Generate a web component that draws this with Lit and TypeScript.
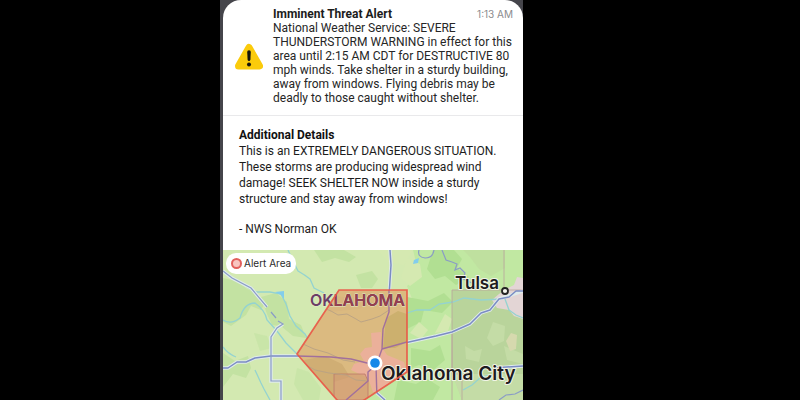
import { LitElement, html, css } from 'lit';
import { customElement, property } from 'lit/decorators.js';

@customElement('warning-icon')
export class WarningIcon extends LitElement {
  static styles = css`
    :host {
      display: block;
    }
    .icon {
      display: block;
      width: 28px;
      height: 28px;
    }
  `;

  render() {
    return html`
      <svg class="icon" viewBox="0 0 28 28" role="img" aria-label="Warning">
        <path
          d="M14 5.500L24.500 24H3.500Z"
          fill="#fbcb0b"
          stroke="#fbcb0b"
          stroke-width="7"
          stroke-linejoin="round"
        />
        <path d="M12.200 10Q12.200 8.300 14 8.300T15.800 10L15.400 17.500Q15.200 19 14 19T12.600 17.500Z" fill="#15130c" />
        <circle cx="14" cy="22.500" r="2" fill="#15130c" />
      </svg>
    `;
  }
}

@customElement('alert-summary')
export class AlertSummary extends LitElement {
  @property() heading = '';
  @property() time = '';
  @property() message = '';

  static styles = css`
    :host {
      display: block;
    }
    .summary {
      display: grid;
      grid-template-columns: 28px 1fr;
      column-gap: 10px;
      align-items: center;
      padding: 7px 8px 10px 12px;
      border-bottom: 1px solid #e9e9eb;
    }
    .top {
      display: flex;
      justify-content: space-between;
      align-items: baseline;
      padding-right: 2px;
    }
    .heading {
      margin: 0;
      font-size: 12px;
      line-height: 14px;
      font-weight: 700;
    }
    .time {
      font-family: Inter, sans-serif;
      font-size: 10px;
      color: #8b8b8e;
    }
    .message {
      margin: 0;
      font-size: 12px;
      line-height: 14px;
      color: #262626;
    }
  `;

  render() {
    return html`
      <section class="summary">
        <warning-icon></warning-icon>
        <div>
          <div class="top">
            <h1 class="heading">${this.heading}</h1>
            <time class="time">${this.time}</time>
          </div>
          <p class="message">${this.message}</p>
        </div>
      </section>
    `;
  }
}

@customElement('alert-details')
export class AlertDetails extends LitElement {
  static styles = css`
    :host {
      display: block;
    }
    .details {
      padding: 11px 16px 13px;
      font-size: 12px;
      line-height: 16px;
      color: #1c1c1c;
    }
    .heading {
      margin: 0;
      font-size: 12px;
      line-height: 16px;
      font-weight: 700;
      color: #111;
    }
    .text {
      margin: 0 0 14px;
    }
    .sender {
      margin: 0;
    }
  `;

  render() {
    return html`
      <section class="details">
        <h2 class="heading">Additional Details</h2>
        <p class="text">
          This is an EXTREMELY DANGEROUS SITUATION. These storms are producing widespread wind
          damage! SEEK SHELTER NOW inside a sturdy structure and stay away from windows!
        </p>
        <p class="sender">- NWS Norman OK</p>
      </section>
    `;
  }
}

@customElement('alert-map')
export class AlertMap extends LitElement {
  static styles = css`
    :host {
      display: block;
      position: relative;
      min-height: 150px;
      overflow: hidden;
      background: #d0e8ad;
      font-family: Inter, 'Liberation Sans', sans-serif;
    }
    .map {
      position: absolute;
      inset: 0;
      width: 100%;
      height: 100%;
    }
    .legend {
      position: absolute;
      top: 3px;
      left: 3px;
      display: flex;
      align-items: center;
      gap: 2px;
      padding: 0 5px;
      border-radius: 10px;
      background: #fff;
      font-size: 10px;
      line-height: 21px;
      color: #2b2b2b;
    }
    .swatch {
      width: 7px;
      height: 7px;
      border: 2px solid #e2605c;
      border-radius: 50%;
      background: #f8c5c0;
    }
    .water {
      fill: none;
      stroke: #94d3d0;
      stroke-width: 1.3;
    }
    .casing {
      fill: none;
      stroke: #dfebea;
      stroke-width: 3.4;
    }
    .road {
      fill: none;
      stroke: #7b8cc4;
      stroke-width: 1.5;
      stroke-linejoin: round;
    }
    .minor {
      fill: none;
      stroke: #8a9cc6;
      stroke-width: 1.2;
    }
    .boundary {
      fill: none;
      stroke: #b9a39c;
      stroke-width: 0.8;
    }
    .label {
      font-weight: 600;
      fill: #1e1b20;
      stroke: #f1f4e6;
      stroke-width: 2px;
      stroke-linejoin: round;
      paint-order: stroke;
    }
    .city {
      font-size: 19px;
    }
    .town {
      font-size: 17px;
    }
    .state {
      font-size: 16px;
      font-weight: 600;
      fill: #6a3d66;
      stroke: #e3ecc9;
      stroke-width: 1px;
      paint-order: stroke;
    }
    .state-inside {
      fill: #94404f;
      stroke: none;
    }
  `;

  render() {
    return html`
      <svg class="map" viewBox="0 0 300 150" preserveAspectRatio="xMidYMin slice" role="img" aria-label="Map of the alert area">
        <defs>
          <clipPath id="alert-clip">
            <path d="M116 40H184V122L129 158H121L74 104Z" />
          </clipPath>
        </defs>
        <rect width="300" height="150" fill="#d3e9b1" />

        <!-- woodland and fields -->
        <g fill="#c3e2a2">
          <path d="M0 28L14 31 24 39 34 43 42 53 38 60 28 56 23 65 8 76 0 72Z" />
          <path d="M38 47L53 43 64 52 66 69 78 75 83 88 70 86 58 76 49 75 44 64Z" />
          <path d="M0 103L12 111 25 106 28 118 23 128 10 124 0 137Z" />
          <path d="M91 0H121L133 7 126 12 112 8 99 12Z" />
          <path d="M133 25L149 21 155 29 149 38H138Z" />
          <path d="M31 83L44 86 49 98 37 101Z" opacity=".6" />
          <path d="M74 118L86 122 98 138 96 150H80L71 134Z" opacity=".6" />
        </g>
        <path d="M190 0H300V150H140L166 132 184 122V90L180 67 190 51 184 36 196 24Z" fill="#c1e8a2" />
        <g fill="#b1df92">
          <path d="M184 47L205 51 221 43 230 52 219 63 201 60 198 72 184 79Z" />
          <path d="M188 98L207 101 217 95 222 110 209 121 196 115 188 118Z" />
          <path d="M210 0H231L239 9 234 18 246 27 233 35 222 26 212 29 204 19Z" />
          <path d="M175 130L193 134 203 128 217 137 210 150H171Z" />
        </g>
        <g fill="#d5e9b1">
          <path d="M184 8L197 14 199 27 187 36 178 28Z" />
          <path d="M196 72L205 80 198 89 187 83Z" />
          <path d="M222 64L229 69 225 81 212 83Z" />
          <path d="M155 0H190L181 15 165 12Z" />
        </g>
        <path d="M229 40H300V150H239L229 122Z" fill="#b9d49b" />
        <path d="M240 0H282V18L268 26 256 19 247 7Z" fill="#bfe09f" />
        <g fill="#c4dca6">
          <path d="M270 72L282 76 281 91 270 96 264 88Z" />
          <path d="M242 96L251 101 259 99 256 112 243 109Z" />
          <path d="M281 96L300 104V114L284 110Z" />
          <path d="M229 124H300V150H239Z" />
        </g>
        <path d="M288 83L294 85 293 99 287 101 283 91Z" fill="#d6d9ae" />
        <path d="M276 44L283 39 291 35 294 27 300 28V69L291 66 286 60 274 58 269 50Z" fill="#e3d5d5" />

        <!-- rivers -->
        <g class="water">
          <path d="M65 0Q70 11 75 21Q82 25 87 29L91 38 101 43" />
          <path d="M16 31Q25 39 34 42L47 42 58 44 63 54 67 66 73 76 82 84 87 93 99 97" />
          <path d="M0 70Q8 75 17 68Q21 53 32 53Q42 60 44 70L54 81 63 93 74 104" />
          <path d="M0 97Q5 104 13 107M32 120L38 133 41 139 47 150" />
          <path d="M184 63L194 60 207 60 216 54 230 52 241 48 258 50 280 49" />
          <path d="M282 49L286 60 293 65 300 68" />
          <path d="M240 140L249 135 258 127 273 124" />
        </g>
        <path d="M52 42L61 41 61 49 58 45Z" fill="#83cdec" />
        <path d="M191 10L196 8 195 13 190 14Z" fill="#83cdec" />
        <path class="minor" d="M196 0Q194 7 202 8Q210 8 211 0M219 0L223 10 229 12 234 14 232 20 237 18 242 23 240 29 249 33 254 39" />

        <!-- county lines -->
        <path class="boundary" d="M281 0V42M229 150V40H300M229 83V124H239V150" />

        <!-- roads -->
        <g class="casing">
          <path d="M0 118H5L14 112H23L32 108 48 106H74L108 107 128 109 144 113 154 113" />
          <path d="M167 0L168 15 166 46 166 62 160 79 159 97 154 113" />
          <path d="M159 99L177 94 213 86 229 82 247 74 258 63 267 60 276 49 300 41" />
          <path d="M153 115L154 143 162 150M270 118L300 116" />
          <path d="M0 21L9 28 28 38 44 57M60 74L54 78 48 87V131H58V150" />
        </g>
        <g class="road">
          <path d="M0 118H5L14 112H23L32 108 48 106H74L108 107 128 109 144 113 154 113" />
          <path d="M167 0L168 15 166 46 166 62 160 79 159 97 154 113" />
          <path d="M159 99L177 94 213 86 229 82 247 74 258 63 267 60 276 49 286 47 293 41 300 41" />
          <path d="M153 115L154 143 162 150M270 118L300 116" />
        </g>
        <g class="minor">
          <path d="M0 21L9 28 28 38 44 57M48 62L53 68M55 71L60 74 54 78 48 87V131H58V150" />
          <path d="M276 150L283 145 292 144 300 140" />
        </g>

        <!-- warned area -->
        <path d="M116 40H184V122L129 158H121L74 104Z" fill="#dbba80" />
        <g clip-path="url(#alert-clip)">
          <path d="M163 68L175 61 184 64V92L172 98H160Z" fill="#ccb06e" />
          <path d="M81 110L102 106 119 114 127 127 111 132V150H104Z" fill="#d0ae74" />
          <path d="M102 45L121 47 131 41H148L153 51 136 59 107 62Z" fill="#d9b67e" />
          <path d="M148 83L158 82V96L164 105 181 112 184 125 166 132 161 142H150L145 128 128 120 131 114 141 111 137 104 142 98 149 97Z" fill="#ebb09a" />
          <path d="M111 124H142L145 131V150H111Z" fill="#d29a74" fill-opacity=".6" stroke="#bd7869" stroke-width=".8" />
          <g fill="none" stroke="#b8a184" stroke-width=".9">
            <path d="M98 57L108 61 115 65 124 64 133 69 138 72 149 69 157 66 166 60" />
            <path d="M80 94L91 99 105 103 120 110 132 112M83 115L92 120 106 123 123 125 133 130 144 131" />
          </g>
          <g fill="none" stroke="#a1709c" stroke-width="1.400" stroke-linejoin="round">
            <path d="M74 106L108 107 128 109 144 113H154L159 99 160 79 166 62V40M159 99L184 92" />
            <path d="M153 115L154 150M153 115L145 122V131L123 150" />
          </g>
        </g>

        <!-- places -->
        <text class="state" x="87" y="56">OKLAHOMA</text>
        <text class="state state-inside" x="87" y="56" clip-path="url(#alert-clip)" aria-hidden="true">OKLAHOMA</text>
        <text class="label town" x="232" y="39">Tulsa</text>
        <circle cx="282" cy="41" r="3" fill="#f5f5ef" stroke="#222" stroke-width="1.800" />
        <text class="label city" x="158" y="130">Oklahoma City</text>
        <path d="M116 40H184V122L129 158H121L74 104Z" fill="none" stroke="#ea5546" stroke-width="1.700" stroke-opacity=".9" />
        <circle cx="152" cy="113" r="7.500" fill="#fff" />
        <circle cx="152" cy="113" r="4.800" fill="#1688e8" />
      </svg>
      <div class="legend"><span class="swatch"></span>Alert Area</div>
    `;
  }
}

@customElement('app-root')
export class AppRoot extends LitElement {
  static styles = css`
    :host {
      display: block;
      min-height: 100vh;
      background: #000;
      font-family: Roboto, 'Liberation Sans', sans-serif;
      color: #1c1c1c;
    }
    .page {
      display: grid;
      grid-template-columns: 220fr 303fr 277fr;
      min-height: 100vh;
    }
    .screen {
      grid-column: 2;
      display: flex;
      padding-left: 3px;
      background: #45454b;
    }
    .card {
      flex: 1;
      min-width: 0;
      display: flex;
      flex-direction: column;
      overflow: hidden;
      border-radius: 18px 18px 0 0;
      background: #fff;
    }
    .area {
      flex: 1;
    }
  `;

  render() {
    return html`
      <main class="page">
        <div class="screen">
          <article class="card">
            <alert-summary
              heading="Imminent Threat Alert"
              time="1:13 AM"
              message="National Weather Service: SEVERE THUNDERSTORM WARNING in effect for this area until 2:15 AM CDT for DESTRUCTIVE 80 mph winds. Take shelter in a sturdy building, away from windows. Flying debris may be deadly to those caught without shelter."
            ></alert-summary>
            <alert-details></alert-details>
            <alert-map class="area"></alert-map>
          </article>
        </div>
      </main>
    `;
  }
}
